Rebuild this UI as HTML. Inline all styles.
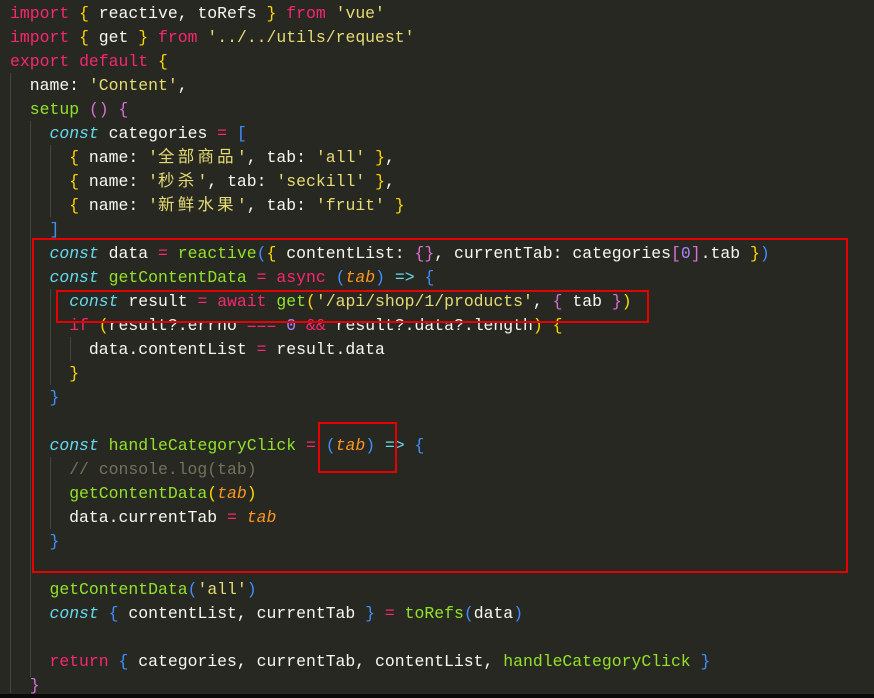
<!DOCTYPE html>
<html><head><meta charset="utf-8"><style>
html,body{margin:0;padding:0;}
body{width:874px;height:698px;background:#272822;position:relative;overflow:hidden;
font-family:"Liberation Mono","Noto Sans CJK SC",monospace;font-size:16.45px;color:#f8f8f2;}
.code{position:absolute;left:10px;top:2px;white-space:pre;line-height:24px;}
.k{color:#f92672}.s{color:#e6db74}.f{color:#92e22a}.c{color:#66d9ef;font-style:italic}
.p{color:#fd971f;font-style:italic}.y{color:#ffd700}.m{color:#da70d6}.b{color:#3f8fff}
.n{color:#ae81ff}.a{color:#66d9ef}.cm{color:#75715e}
.z{letter-spacing:3.29px}
.g{position:absolute;width:1px;background:#45463f;}
.box{position:absolute;border:2px solid #e60000;box-sizing:border-box;}
.bar{position:absolute;left:0;right:0;top:694px;height:4px;background:#0a0a0a;}
</style></head><body>
<div class="g" style="left:10px;top:73px;height:620px"></div>
<div class="g" style="left:30px;top:121px;height:556px"></div>
<div class="g" style="left:50px;top:145px;height:72px"></div>
<div class="g" style="left:50px;top:289px;height:96px"></div>
<div class="g" style="left:70px;top:337px;height:24px"></div>
<div class="g" style="left:50px;top:457px;height:72px"></div>
<div class="code"><span class="k">import</span> <span class="y">{</span> reactive, toRefs <span class="y">}</span> <span class="k">from</span> <span class="s">'vue'</span>
<span class="k">import</span> <span class="y">{</span> get <span class="y">}</span> <span class="k">from</span> <span class="s">'../../utils/request'</span>
<span class="k">export</span> <span class="k">default</span> <span class="y">{</span>
  name: <span class="s">'Content'</span>,
  <span class="f">setup</span> <span class="m">()</span> <span class="m">{</span>
    <span class="c">const</span> categories <span class="k">=</span> <span class="b">[</span>
      <span class="y">{</span> name: <span class="s">'<span class="z">全部商品</span>'</span>, tab: <span class="s">'all'</span> <span class="y">}</span>,
      <span class="y">{</span> name: <span class="s">'<span class="z">秒杀</span>'</span>, tab: <span class="s">'seckill'</span> <span class="y">}</span>,
      <span class="y">{</span> name: <span class="s">'<span class="z">新鲜水果</span>'</span>, tab: <span class="s">'fruit'</span> <span class="y">}</span>
    <span class="b">]</span>
    <span class="c">const</span> data <span class="k">=</span> <span class="f">reactive</span><span class="b">(</span><span class="y">{</span> contentList: <span class="m">{}</span>, currentTab: categories<span class="m">[</span><span class="n">0</span><span class="m">]</span>.tab <span class="y">}</span><span class="b">)</span>
    <span class="c">const</span> <span class="f">getContentData</span> <span class="k">=</span> <span class="k">async</span> <span class="b">(</span><span class="p">tab</span><span class="b">)</span> <span class="a">=&gt;</span> <span class="b">{</span>
      <span class="c">const</span> result <span class="k">=</span> <span class="k">await</span> <span class="f">get</span><span class="y">(</span><span class="s">'/api/shop/1/products'</span>, <span class="m">{</span> tab <span class="m">}</span><span class="y">)</span>
      <span class="k">if</span> <span class="y">(</span>result?.errno <span class="k">===</span> <span class="n">0</span> <span class="k">&amp;&amp;</span> result?.data?.length<span class="y">)</span> <span class="y">{</span>
        data.contentList <span class="k">=</span> result.data
      <span class="y">}</span>
    <span class="b">}</span>

    <span class="c">const</span> <span class="f">handleCategoryClick</span> <span class="k">=</span> <span class="b">(</span><span class="p">tab</span><span class="b">)</span> <span class="a">=&gt;</span> <span class="b">{</span>
      <span class="cm">// console.log(tab)</span>
      <span class="f">getContentData</span><span class="y">(</span><span class="p">tab</span><span class="y">)</span>
      data.currentTab <span class="k">=</span> <span class="p">tab</span>
    <span class="b">}</span>

    <span class="f">getContentData</span><span class="b">(</span><span class="s">'all'</span><span class="b">)</span>
    <span class="c">const</span> <span class="b">{</span> contentList, currentTab <span class="b">}</span> <span class="k">=</span> <span class="f">toRefs</span><span class="b">(</span>data<span class="b">)</span>

    <span class="k">return</span> <span class="b">{</span> categories, currentTab, contentList, <span class="f">handleCategoryClick</span> <span class="b">}</span>
  <span class="m">}</span></div>
<div class="box" style="left:32px;top:238px;width:816px;height:335px"></div>
<div class="box" style="left:56px;top:290px;width:593px;height:33px"></div>
<div class="box" style="left:318px;top:422px;width:79px;height:51px"></div>
<div class="bar"></div>
</body></html>
